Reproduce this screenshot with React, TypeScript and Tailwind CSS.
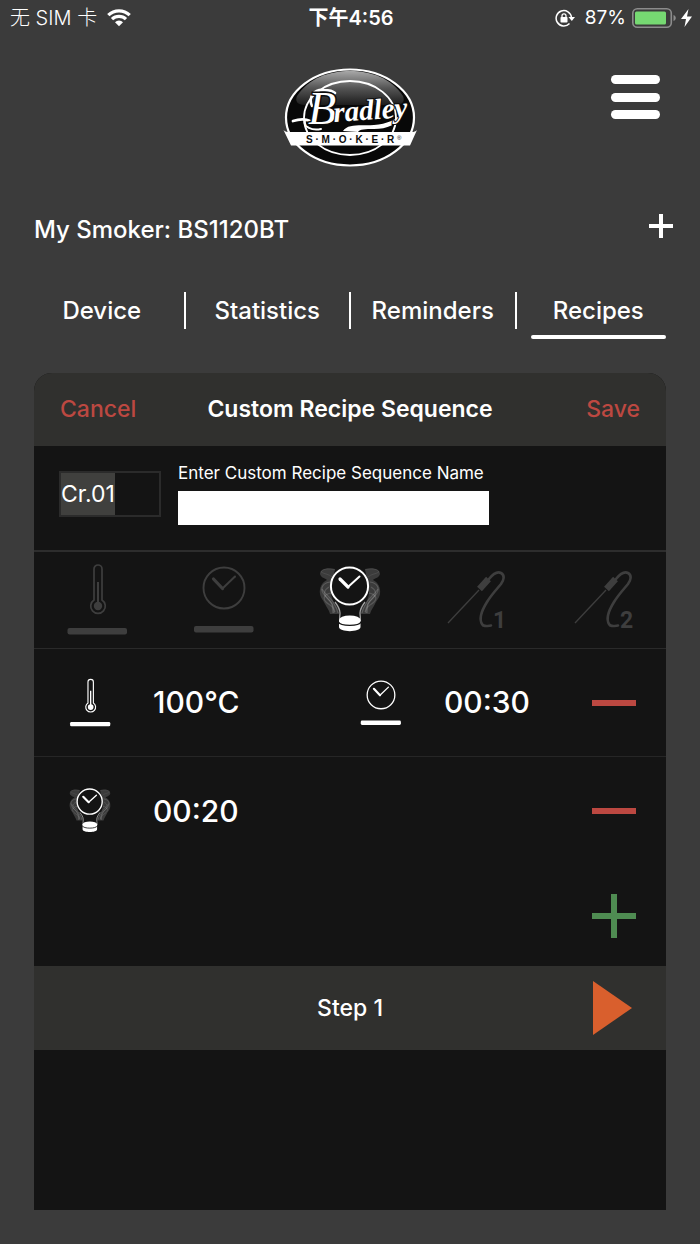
import { Fragment, ReactNode } from 'react';

type IconName = 'temp' | 'timer' | 'smoke' | 'probe1' | 'probe2';

const TABS = ['Device', 'Statistics', 'Reminders', 'Recipes'];

const MODES: { icon: IconName; label: string }[] = [
  { icon: 'temp', label: 'Oven temperature' },
  { icon: 'timer', label: 'Oven timer' },
  { icon: 'smoke', label: 'Smoke timer' },
  { icon: 'probe1', label: 'Probe 1' },
  { icon: 'probe2', label: 'Probe 2' },
];

const ROWS: { icon: IconName; value: string }[][] = [
  [
    { icon: 'temp', value: '100°C' },
    { icon: 'timer', value: '00:30' },
  ],
  [{ icon: 'smoke', value: '00:20' }],
];

// One side of the smoke cloud, mirrored for the other side
function SmokeSide() {
  return (
    <g fill="none" stroke="#fff">
      <path
        d="M25 9C17 7 10 9 10 14c1 4 5 4 7 6-5 2-8 8-7 14 1 5 4 7 5 10 2 4 4 6 5 10h9c0-4-1-6-4-10-4-6-5-12-3-19z"
        fill="#fff"
        stroke="none"
        opacity="0.17"
      />
      <path d="M25 10c-6-2-13-1-14 2 3 2 8 2 11 5" strokeWidth="0.700" opacity="0.12" />
      <path d="M20 22c-7 1-10 6-7 11s7 6 9 11c1 4 1 7 1 9" strokeWidth="1.200" opacity="0.17" />
      <path d="M19 27c-5 3-6 7-2 11s8 8 7 15" strokeWidth="1.200" opacity="0.15" />
      <path d="M21 33c-6 1-9 5-5 9s7 3 9 10" strokeWidth="1.200" opacity="0.15" />
      <path d="M12 29c3 5 8 8 11 13s4 6 5 11" strokeWidth="1.200" opacity="0.17" />
      <path d="M25 42c3 4 5 7 5 11s-1 5 0 8" strokeWidth="1.300" opacity="0.6" />
    </g>
  );
}

function Probe({ digit }: { digit: string }) {
  return (
    <g fill="none" stroke="currentColor">
      <path d="M12 63 43 30" strokeWidth="1.300" />
      <path d="M43.500 29 52.500 19" strokeWidth="6.500" />
      <path
        d="M53 19c4-5 8-8 12-6 4 2 3 7 0 11-4 5-9 10-14 18-5 8-8 17-5 22 1 3 5 2 9 1.500"
        strokeWidth="2.600"
        strokeLinecap="round"
      />
      <text
        x="57"
        y="68"
        fill="currentColor"
        stroke="none"
        className="font-[Roboto,sans-serif] text-[23px] font-bold"
      >
        {digit}
      </text>
    </g>
  );
}

function ModeIcon({ name, className }: { name: IconName; className: string }) {
  return (
    <svg viewBox="0 0 80 80" className={className} aria-hidden="true">
      {name === 'temp' && (
        <g fill="none" stroke="currentColor">
          <path d="M37 40V9a4 4 0 0 1 8 0V40a7.300 7.300 0 1 1-8 0z" strokeWidth="1.700" />
          <path d="M41 22V46" strokeWidth="2" />
          <circle cx="41" cy="46" r="4.200" fill="currentColor" stroke="none" />
          <rect x="10.500" y="68" width="59.500" height="6.500" rx="2" fill="currentColor" stroke="none" />
        </g>
      )}
      {name === 'timer' && (
        <g fill="none" stroke="currentColor" strokeLinecap="round">
          <circle cx="40" cy="28" r="20.500" strokeWidth="1.900" />
          <path d="M29.500 19 38.500 28.500" strokeWidth="3.200" />
          <path d="M38.500 28.500 51 16.500" strokeWidth="2" />
          <rect x="10" y="66" width="59.500" height="6.500" rx="2" fill="currentColor" stroke="none" />
        </g>
      )}
      {name === 'smoke' && (
        <g>
          <SmokeSide />
          <g transform="matrix(-1 0 0 1 80 0)">
            <SmokeSide />
          </g>
          <g fill="none" stroke="currentColor" strokeLinecap="round">
            <circle cx="39.500" cy="26" r="18.600" strokeWidth="2" fill="#141414" />
            <path d="M30 19 38 27" strokeWidth="3.200" />
            <path d="M38 27 49.500 16.500" strokeWidth="2" />
          </g>
          <path d="M29 60v7c0 5.500 21.500 5.500 21.500 0v-7z" fill="currentColor" />
          <ellipse cx="39.800" cy="60" rx="10.800" ry="4.500" fill="currentColor" />
          <path d="M28.500 62c2 4.500 20.500 4.500 22.500 0" fill="none" stroke="#141414" strokeWidth="1.200" />
        </g>
      )}
      {name === 'probe1' && <Probe digit="1" />}
      {name === 'probe2' && <Probe digit="2" />}
    </svg>
  );
}

function Logo() {
  return (
    <svg viewBox="8 7 134 101" className="w-[134px]" role="img" aria-label="Bradley Smoker">
      <defs>
        <linearGradient id="gloss" x1="0" y1="0" x2="0" y2="1">
          <stop offset="0" stopColor="#a8a8a8" />
          <stop offset="0.5" stopColor="#555" />
          <stop offset="1" stopColor="#1c1c1c" />
        </linearGradient>
      </defs>
      <ellipse cx="75" cy="57.500" rx="64" ry="48" fill="#080808" stroke="#fff" strokeWidth="2.200" />
      <path d="M22 36C34 18 54 11 75 11s41 7 53 25c2 5 0 9-8 9H30c-8 0-10-4-8-9z" fill="url(#gloss)" />
      <ellipse cx="75" cy="58" rx="46" ry="37" fill="none" stroke="#fff" strokeWidth="1.800" />
      {/* Swashes round the name */}
      <g fill="none" stroke="#fff" strokeLinecap="round">
        <path d="M18 61c6-2 13-2 17 0" strokeWidth="2.800" />
        <path d="M37 46c-4-9 2-17 12-16 5 0 9 1 11 3" strokeWidth="2.600" />
        <path d="M30 60c-2 7 7 11 16 9" strokeWidth="2" />
      </g>
      <path d="M68 71c5-8 19-5 31-6 13-1 22-5 28-12-4 12-15 16-28 16-9 0-14 0-16 3z" fill="#fff" />
      <g className="font-['Liberation_Serif',serif] italic" fill="#fff" stroke="#0c0c0c" strokeWidth="4" paintOrder="stroke">
        <text x="33" y="64" className="text-[46px]" strokeWidth="3">B</text>
        <text x="59" y="62" transform="rotate(-4 59 62)" className="text-[29px] font-bold" strokeWidth="2">
          radley
        </text>
      </g>
      <path d="M8.500 70c1.500 1.500 3 2 5 2H137c2 0 3.500-.5 5-2l-7 15.500H16z" fill="#fff" />
      <text x="31" y="83" className="font-['Liberation_Sans',Arial,sans-serif] text-[10px] font-bold" fill="#0c0c0c">
        S · M · O · K · E · R
      </text>
      <text x="122" y="80" className="font-['Liberation_Sans',Arial,sans-serif] text-[6px]" fill="#0c0c0c">
        ®
      </text>
    </svg>
  );
}

function StatusBar() {
  return (
    <div className="grid h-9 grid-cols-[1fr_auto_1fr] items-center pr-2 pl-[10px]">
      <div className="flex items-center gap-[10px]">
        <span className="text-[20px] font-light">无 SIM 卡</span>
        <svg viewBox="0 0 24 18" className="w-6" aria-hidden="true">
          <g fill="none" stroke="#fff" strokeWidth="3.200">
            <path d="M1.300 6.200a15.200 15.200 0 0 1 21.400 0" />
            <path d="M5 10.200a10 10 0 0 1 14 0" />
          </g>
          <path d="M8 13.200a5.700 5.700 0 0 1 8 0L12 17.200z" fill="#fff" />
        </svg>
      </div>
      <span className="text-[20px] font-semibold">下午4:56</span>
      <div className="flex items-center justify-end">
        <svg viewBox="0 0 20 18" className="mr-[10px] w-5" aria-hidden="true">
          <path d="M16.500 8.500A7.700 7.700 0 1 0 14.500 14.500" fill="none" stroke="#fff" strokeWidth="1.500" />
          <path d="M13.500 8h6.500l-3.200 4z" fill="#fff" />
          <rect x="5.500" y="8" width="7" height="5.500" rx="0.800" fill="#fff" />
          <path d="M7 8.500V6.800a2 2 0 0 1 4 0v1.700" fill="none" stroke="#fff" strokeWidth="1.300" />
        </svg>
        <span className="mr-[6px] text-[19px]">87%</span>
        <svg viewBox="0 0 45 20" className="mr-1 w-[45px]" aria-hidden="true">
          <rect x="0.800" y="0.800" width="38.500" height="18.400" rx="4.500" fill="none" stroke="#8c8c8c" strokeWidth="1.600" />
          <rect x="3" y="3.500" width="31" height="13" rx="1.500" fill="#76d972" />
          <path d="M41.500 7c3 1 3 5 0 6z" fill="#8c8c8c" />
        </svg>
        <svg viewBox="0 0 11 18" className="w-[11px]" aria-hidden="true">
          <path d="M7.500 0 0 10h5L3.500 18 11 7.500H6z" fill="#fff" />
        </svg>
      </div>
    </div>
  );
}

function RecipeRow({ children }: { children: ReactNode }) {
  return (
    <div className="flex h-[108px] items-center pr-[30px] pl-[29px]">
      <div className="flex flex-1 items-center">{children}</div>
      <button type="button" aria-label="Remove" className="flex h-11 w-11 items-center">
        <span className="h-[6px] w-full bg-[#bc4841]" />
      </button>
    </div>
  );
}

export default function App() {
  return (
    <div className="min-h-screen bg-[#3b3b3b] pb-[34px] font-[Inter,'Noto_Sans_CJK_SC',sans-serif] text-white">
      <StatusBar />

      {/* Logo and menu */}
      <header className="grid grid-cols-[1fr_auto_1fr] px-10 pt-[31px]">
        <div />
        <Logo />
        <button type="button" aria-label="Menu" className="mt-2 flex h-11 w-[49px] flex-col justify-between justify-self-end">
          <span className="h-[9px] w-full rounded-full bg-white" />
          <span className="h-[9px] w-full rounded-full bg-white" />
          <span className="h-[9px] w-full rounded-full bg-white" />
        </button>
      </header>

      <main className="px-[34px]">
        <div className="mt-[42px] flex h-10 items-center justify-between">
          <h1 className="text-[24px] font-medium">My Smoker: BS1120BT</h1>
          <button type="button" aria-label="Add smoker" className="mr-[-7px] mb-2">
            <svg viewBox="0 0 24 24" className="w-6" aria-hidden="true">
              <path d="M12 0V24M0 12H24" stroke="#fff" strokeWidth="4" />
            </svg>
          </button>
        </div>

        {/* Tabs */}
        <nav className="mt-[42px] flex gap-[14px]">
          {TABS.map((tab, i) => (
            <Fragment key={tab}>
              {i > 0 && <span className="h-[37px] w-[2px] bg-white" />}
              <a
                href={`#${tab.toLowerCase()}`}
                className="flex h-[47px] w-0 flex-1 flex-col items-center justify-between pt-1 text-[24px] leading-[30px] font-medium"
              >
                {tab}
                {tab === 'Recipes' && <span className="h-1 w-full rounded-full bg-white" />}
              </a>
            </Fragment>
          ))}
        </nav>

        <section className="mt-[34px] overflow-hidden rounded-t-[18px] bg-[#141414] pb-40">
          <div className="grid h-[73px] grid-cols-[1fr_auto_1fr] items-center bg-[#30302e] px-[26px] text-[23px] font-medium">
            <button type="button" className="justify-self-start text-[#bc4841]">Cancel</button>
            <h2 className="font-semibold">Custom Recipe Sequence</h2>
            <button type="button" className="justify-self-end text-[#bc4841]">Save</button>
          </div>

          {/* Recipe name */}
          <div className="flex h-[106px] border-b-2 border-[#2d2d2d] pl-[25px]">
            <div className="mt-[25px] flex h-[46px] w-[102px] border-2 border-[#2b2b2b] bg-[#141414]">
              <label htmlFor="suffix" className="flex items-center bg-[#40403e] text-[23px]">Cr.01</label>
              <input id="suffix" className="w-0 flex-1 bg-transparent px-1 text-[23px] outline-none" />
            </div>
            <div className="ml-[17px] flex w-[311px] flex-col pt-[15px]">
              <label htmlFor="recipe-name" className="text-[17px] leading-6 whitespace-nowrap">
                Enter Custom Recipe Sequence Name
              </label>
              <input id="recipe-name" className="mt-[6px] h-[34px] w-full bg-white px-2 text-[17px] text-black outline-none" />
            </div>
          </div>

          {/* Step types */}
          <div className="flex h-[97px] items-center border-b border-[#2a2a2a]">
            {MODES.map(({ icon, label }) => (
              <button
                key={icon}
                type="button"
                aria-label={label}
                className={`flex flex-1 justify-center ${icon === 'smoke' ? 'text-white' : 'text-[#3e3e3e]'}`}
              >
                <ModeIcon name={icon} className="size-20" />
              </button>
            ))}
          </div>

          <div className="divide-y divide-[#262626]">
            {ROWS.map((row) => (
              <RecipeRow key={row[0].icon}>
                {row.map(({ icon, value }) => (
                  <div key={icon} className="flex w-[55%] items-center gap-9 last:not-first:w-auto">
                    <ModeIcon name={icon} className="size-[54px]" />
                    <span className="text-[30px] font-medium">{value}</span>
                  </div>
                ))}
              </RecipeRow>
            ))}
          </div>

          <div className="flex h-[101px] items-center justify-end pr-[30px]">
            <button type="button" aria-label="Add row">
              <svg viewBox="0 0 44 44" className="w-11" aria-hidden="true">
                <path d="M22 0V44M0 22H44" stroke="#4f8c52" strokeWidth="6" />
              </svg>
            </button>
          </div>

          <div className="grid h-[84px] grid-cols-[1fr_auto_1fr] items-center bg-[#30302e] px-[34px] text-[23px] font-medium">
            <div />
            <span>Step 1</span>
            <button type="button" aria-label="Next step" className="justify-self-end">
              <svg viewBox="0 0 39 54" className="w-[39px]" aria-hidden="true">
                <path d="M0 0 39 27 0 54z" fill="#d95f2d" />
              </svg>
            </button>
          </div>
        </section>
      </main>
    </div>
  );
}
